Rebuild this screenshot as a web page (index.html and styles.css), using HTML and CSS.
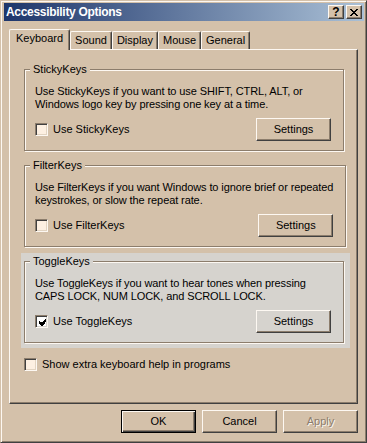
FILE: index.html
```html
<!DOCTYPE html>
<html>
<head>
<meta charset="utf-8">
<title>Accessibility Options</title>
<link rel="stylesheet" href="styles.css">
</head>
<body>
<div class="window">
  <div class="titlebar">
    <span class="title">Accessibility Options</span>
    <div class="caption-btns">
      <span class="cbtn help">?</span>
      <span class="cbtn close"><svg width="8" height="7" viewBox="0 0 8 7"><path d="M0 0h2v1h-2zM6 0h2v1h-2zM1 1h2v1h-2zM5 1h2v1h-2zM2 2h4v1h-4zM3 3h2v1h-2zM2 4h4v1h-4zM1 5h2v1h-2zM5 5h2v1h-2zM0 6h2v1h-2zM6 6h2v1h-2z"/></svg></span>
    </div>
  </div>
  <div class="content">
    <div class="tabs">
      <div class="tab active">Keyboard</div>
      <div class="tab">Sound</div>
      <div class="tab">Display</div>
      <div class="tab">Mouse</div>
      <div class="tab">General</div>
    </div>
    <div class="panel">
      <div class="gwrap">
        <fieldset class="group">
          <legend>StickyKeys</legend>
          <p class="desc">Use StickyKeys if you want to use SHIFT, CTRL, ALT, or<br>Windows logo key by pressing one key at a time.</p>
          <div class="row">
            <label class="check"><span class="box"></span>Use StickyKeys</label>
            <button class="btn">Settings</button>
          </div>
        </fieldset>
      </div>
      <div class="gwrap">
        <fieldset class="group">
          <legend>FilterKeys</legend>
          <p class="desc">Use FilterKeys if you want Windows to ignore brief or repeated<br>keystrokes, or slow the repeat rate.</p>
          <div class="row">
            <label class="check"><span class="box"></span>Use FilterKeys</label>
            <button class="btn">Settings</button>
          </div>
        </fieldset>
      </div>
      <div class="gwrap hot">
        <fieldset class="group">
          <legend>ToggleKeys</legend>
          <p class="desc">Use ToggleKeys if you want to hear tones when pressing<br>CAPS LOCK, NUM LOCK, and SCROLL LOCK.</p>
          <div class="row">
            <label class="check"><span class="box checked"><svg width="7" height="7" viewBox="0 0 7 7"><path d="M6 0h1v3h-1zM5 1h1v4h-1zM4 2h1v4h-1zM3 3h1v4h-1zM2 3h1v4h-1zM1 3h1v3h-1zM0 2h1v3h-1z"/></svg></span>Use ToggleKeys</label>
            <button class="btn">Settings</button>
          </div>
        </fieldset>
      </div>
      <label class="check extra"><span class="box"></span>Show extra keyboard help in programs</label>
    </div>
    <div class="actions">
      <button class="btn default">OK</button>
      <button class="btn">Cancel</button>
      <button class="btn disabled">Apply</button>
    </div>
  </div>
</div>
</body>
</html>
```
FILE: styles.css
```css
* { box-sizing: border-box; }
html, body { margin: 0; padding: 0; }
body {
  background: #d4c1aa;
  font-family: "Liberation Sans", Arial, sans-serif;
  font-size: 11px;
  line-height: 13px;
  color: #000;
}
.window {
  width: 367px;
  height: 443px;
  border: 1px solid;
  border-color: #d4c1aa #404040 #404040 #d4c1aa;
  box-shadow: inset 1px 1px #fdf8f2, inset -1px -1px #8c7d6c;
  padding: 2px 2px 0 3px;
  display: flex;
  flex-direction: column;
}
.titlebar {
  height: 18px;
  display: flex;
  align-items: center;
  justify-content: space-between;
  background: linear-gradient(90deg, #1e366b, #aac0d6);
  padding: 0 2px;
}
.title {
  color: #fff;
  font-weight: bold;
  font-size: 12px;
  letter-spacing: -0.3px;
}
.caption-btns { display: flex; gap: 2px; }
.cbtn {
  width: 16px;
  height: 14px;
  display: flex;
  align-items: center;
  justify-content: center;
  background: #d4c1aa;
  border: 1px solid;
  border-color: #fdf8f2 #404040 #404040 #fdf8f2;
  box-shadow: inset -1px -1px #8c7d6c;
  font-weight: bold;
  font-size: 12px;
  line-height: 12px;
}
.cbtn svg { display: block; }
.content { display: flex; flex-direction: column; padding-top: 8px; }
.tabs {
  display: flex;
  align-items: flex-end;
  height: 20px;
  padding-left: 5px;
}
.tab {
  height: 18px;
  padding: 2px 4px 0;
  border: 1px solid;
  border-bottom: none;
  border-color: #fdf8f2 #404040 #fdf8f2 #fdf8f2;
  box-shadow: inset -1px 0 #8c7d6c;
  border-radius: 2px 2px 0 0;
  white-space: nowrap;
}
.tab.active {
  height: 21px;
  margin-bottom: -1px;
  padding: 2px 6px 0;
  background: #d4c1aa;
  position: relative;
  z-index: 1;
}
.panel {
  margin-left: 5px;
  width: 349px;
  height: 355px;
  border: 1px solid;
  border-color: #fdf8f2 #404040 #404040 #fdf8f2;
  box-shadow: inset -1px -1px #8c7d6c;
  padding-top: 11px;
}
.gwrap {
  margin-left: 11px;
  width: 329px;
  padding: 2px 6px 5px 3px;
  background: #d4c1aa;
}
.gwrap + .gwrap { margin-top: 1px; }
.gwrap.hot { background: #d6d3ce; }
.group {
  margin: 0;
  width: 320px;
  padding: 0 12px 9px 10px;
  border: 1px solid #8c7d6c;
  box-shadow: inset 1px 1px #fdf8f2, 1px 1px #fdf8f2;
  background: inherit;
}
.group legend {
  margin-left: -5px;
  padding: 0 3px;
  line-height: 13px;
  background: inherit;
}
.desc {
  margin: 9px 0 0;
  white-space: nowrap;
  letter-spacing: -0.1px;
}
.row {
  margin-top: 7px;
  height: 23px;
  display: flex;
  align-items: center;
  justify-content: space-between;
}
.check {
  display: flex;
  align-items: center;
  gap: 5px;
}
.box {
  width: 13px;
  height: 13px;
  border: 1px solid;
  border-color: #8c7d6c #fdf8f2 #fdf8f2 #8c7d6c;
  box-shadow: inset 1px 1px #404040, inset -1px -1px #e2d4c2;
  background: #fdf0e2;
  display: flex;
  align-items: center;
  justify-content: center;
}
.box.checked { background: #fff; box-shadow: inset 1px 1px #404040, inset -1px -1px #d6d3ce; }
.box svg { display: block; margin: 1px 0 0 1px; }
.extra { margin: 10px 0 0 14px; }
.btn {
  width: 75px;
  height: 23px;
  padding: 0;
  font: inherit;
  color: #000;
  background: transparent;
  border: 1px solid;
  border-color: #fdf8f2 #404040 #404040 #fdf8f2;
  box-shadow: inset -1px -1px #8c7d6c;
}
.btn.default {
  border-color: #000;
  box-shadow: inset 1px 1px #fdf8f2, inset -1px -1px #404040, inset -2px -2px #8c7d6c;
}
.btn.disabled {
  color: #8c7d6c;
  text-shadow: 1px 1px #fdf8f2;
}
.actions {
  display: flex;
  justify-content: flex-end;
  gap: 6px;
  margin-top: 6px;
  padding-right: 6px;
}
```
